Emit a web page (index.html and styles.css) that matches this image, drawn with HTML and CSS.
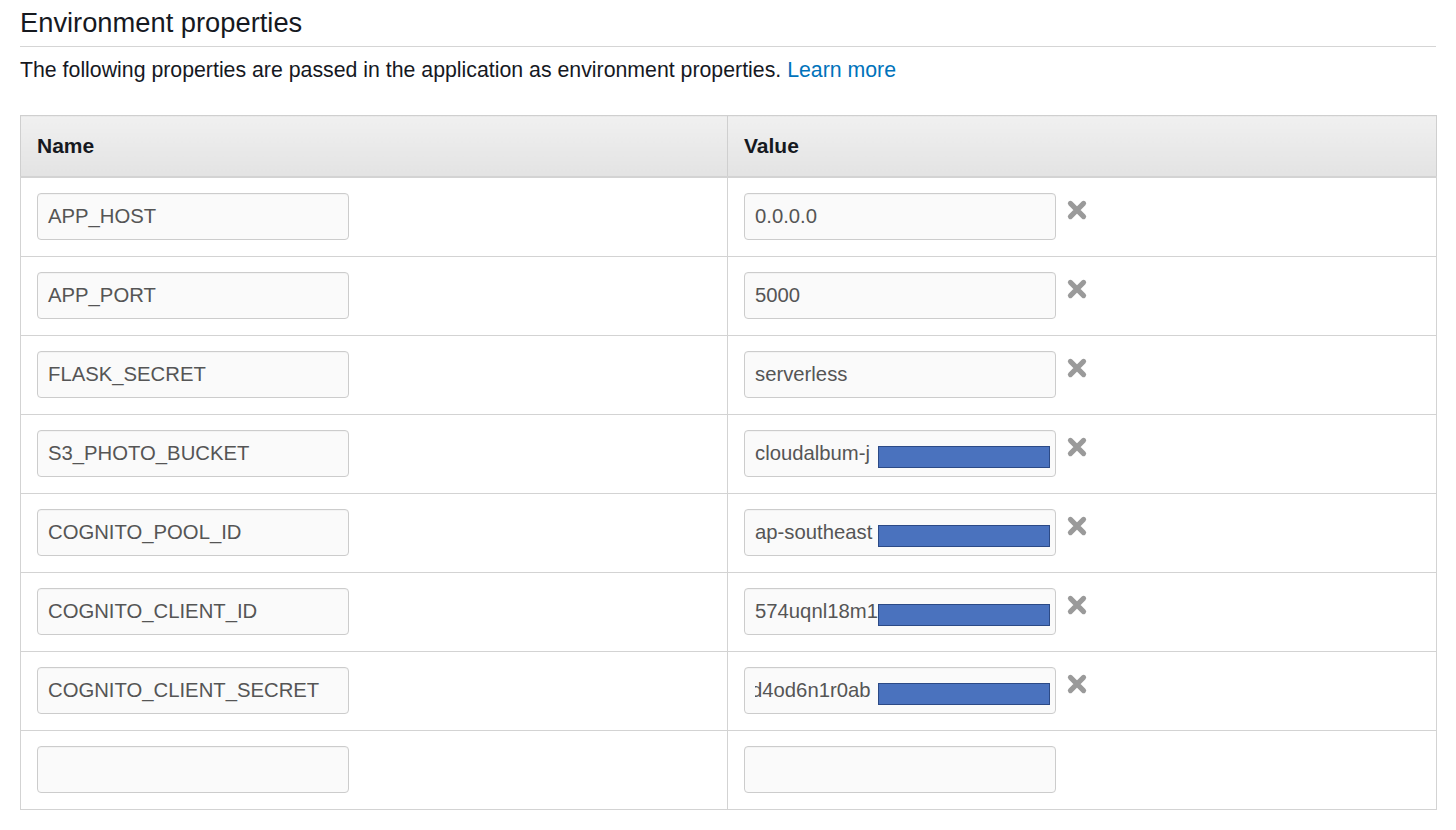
FILE: index.html
```html
<!DOCTYPE html>
<html>
<head>
<meta charset="utf-8">
<link rel="stylesheet" href="styles.css">
</head>
<body>
<div class="page">
  <h2 class="title">Environment properties</h2>
  <p class="desc">The following properties are passed in the application as environment properties. <a href="#" class="link">Learn more</a></p>
  <table class="props">
    <colgroup><col class="c-name"><col class="c-value"></colgroup>
    <thead>
      <tr><th>Name</th><th>Value</th></tr>
    </thead>
    <tbody>
      <tr><td><div class="field">APP_HOST</div></td><td><div class="vcell"><div class="field">0.0.0.0</div><svg class="del" viewBox="0 0 20 20"><path d="M4 4L16 16M16 4L4 16"/></svg></div></td></tr>
      <tr><td><div class="field">APP_PORT</div></td><td><div class="vcell"><div class="field">5000</div><svg class="del" viewBox="0 0 20 20"><path d="M4 4L16 16M16 4L4 16"/></svg></div></td></tr>
      <tr><td><div class="field">FLASK_SECRET</div></td><td><div class="vcell"><div class="field">serverless</div><svg class="del" viewBox="0 0 20 20"><path d="M4 4L16 16M16 4L4 16"/></svg></div></td></tr>
      <tr><td><div class="field">S3_PHOTO_BUCKET</div></td><td><div class="vcell"><div class="field">cloudalbum-j<span class="redact"></span></div><svg class="del" viewBox="0 0 20 20"><path d="M4 4L16 16M16 4L4 16"/></svg></div></td></tr>
      <tr><td><div class="field">COGNITO_POOL_ID</div></td><td><div class="vcell"><div class="field">ap-southeast<span class="redact"></span></div><svg class="del" viewBox="0 0 20 20"><path d="M4 4L16 16M16 4L4 16"/></svg></div></td></tr>
      <tr><td><div class="field">COGNITO_CLIENT_ID</div></td><td><div class="vcell"><div class="field">574uqnl18m1<span class="redact"></span></div><svg class="del" viewBox="0 0 20 20"><path d="M4 4L16 16M16 4L4 16"/></svg></div></td></tr>
      <tr><td><div class="field">COGNITO_CLIENT_SECRET</div></td><td><div class="vcell"><div class="field"><span class="clip"><span class="shift">d4od6n1r0ab</span></span><span class="redact"></span></div><svg class="del" viewBox="0 0 20 20"><path d="M4 4L16 16M16 4L4 16"/></svg></div></td></tr>
      <tr><td><div class="field"></div></td><td><div class="vcell"><div class="field"></div></div></td></tr>
    </tbody>
  </table>
</div>
</body>
</html>
```

FILE: styles.css
```css
html, body {
  margin: 0;
  padding: 0;
  background: #ffffff;
}
body {
  font-family: "Liberation Sans", Arial, Helvetica, sans-serif;
  color: #16191f;
}
.page {
  padding: 0 20px;
}
.title {
  margin: 0;
  padding-top: 7px;
  font-size: 27.3px;
  font-weight: normal;
  line-height: 32px;
  height: 39px;
  border-bottom: 1px solid #d5d5d5;
}
.desc {
  margin: 0;
  padding-top: 11px;
  font-size: 21.3px;
  line-height: 24px;
  color: #16191f;
}
.link {
  color: #0073bb;
  text-decoration: none;
}
.props {
  margin-top: 33px;
  width: 1416px;
  border-collapse: collapse;
  table-layout: fixed;
}
.c-name { width: 707px; }
.c-value { width: 709px; }
.props th {
  height: 60px;
  padding: 0 16px;
  text-align: left;
  font-size: 21px;
  font-weight: bold;
  color: #16191f;
  background: linear-gradient(#f0f0f0, #e3e3e3);
  border: 1px solid #cfcfcf;
  border-bottom: 2px solid #d3d3d3;
}
.props td {
  height: 46px;
  padding: 15px 16px 16px 16px;
  border: 1px solid #d3d3d3;
  vertical-align: top;
}
.vcell {
  display: flex;
  align-items: flex-start;
  gap: 10px;
}
.field {
  position: relative;
  box-sizing: border-box;
  width: 312px;
  height: 47px;
  padding: 0 10px;
  border: 1px solid #cccccc;
  border-radius: 4px;
  background: #fafafa;
  font-size: 20.3px;
  line-height: 45px;
  color: #555555;
  white-space: nowrap;
  overflow: hidden;
  box-shadow: inset 0 1px 1px rgba(0,0,0,0.03);
}
.clip {
  display: block;
  overflow: hidden;
}
.shift {
  display: inline-block;
  margin-left: -4px;
}
.redact {
  position: absolute;
  left: 133px;
  top: 15px;
  width: 172px;
  height: 22px;
  box-sizing: border-box;
  background: #4a72be;
  border: 1px solid #2c4a86;
}
.del {
  flex: none;
  width: 22px;
  height: 22px;
  margin-top: 6px;
  fill: none;
  stroke: #9a9a9a;
  stroke-width: 4.6;
  stroke-linecap: round;
}
```
